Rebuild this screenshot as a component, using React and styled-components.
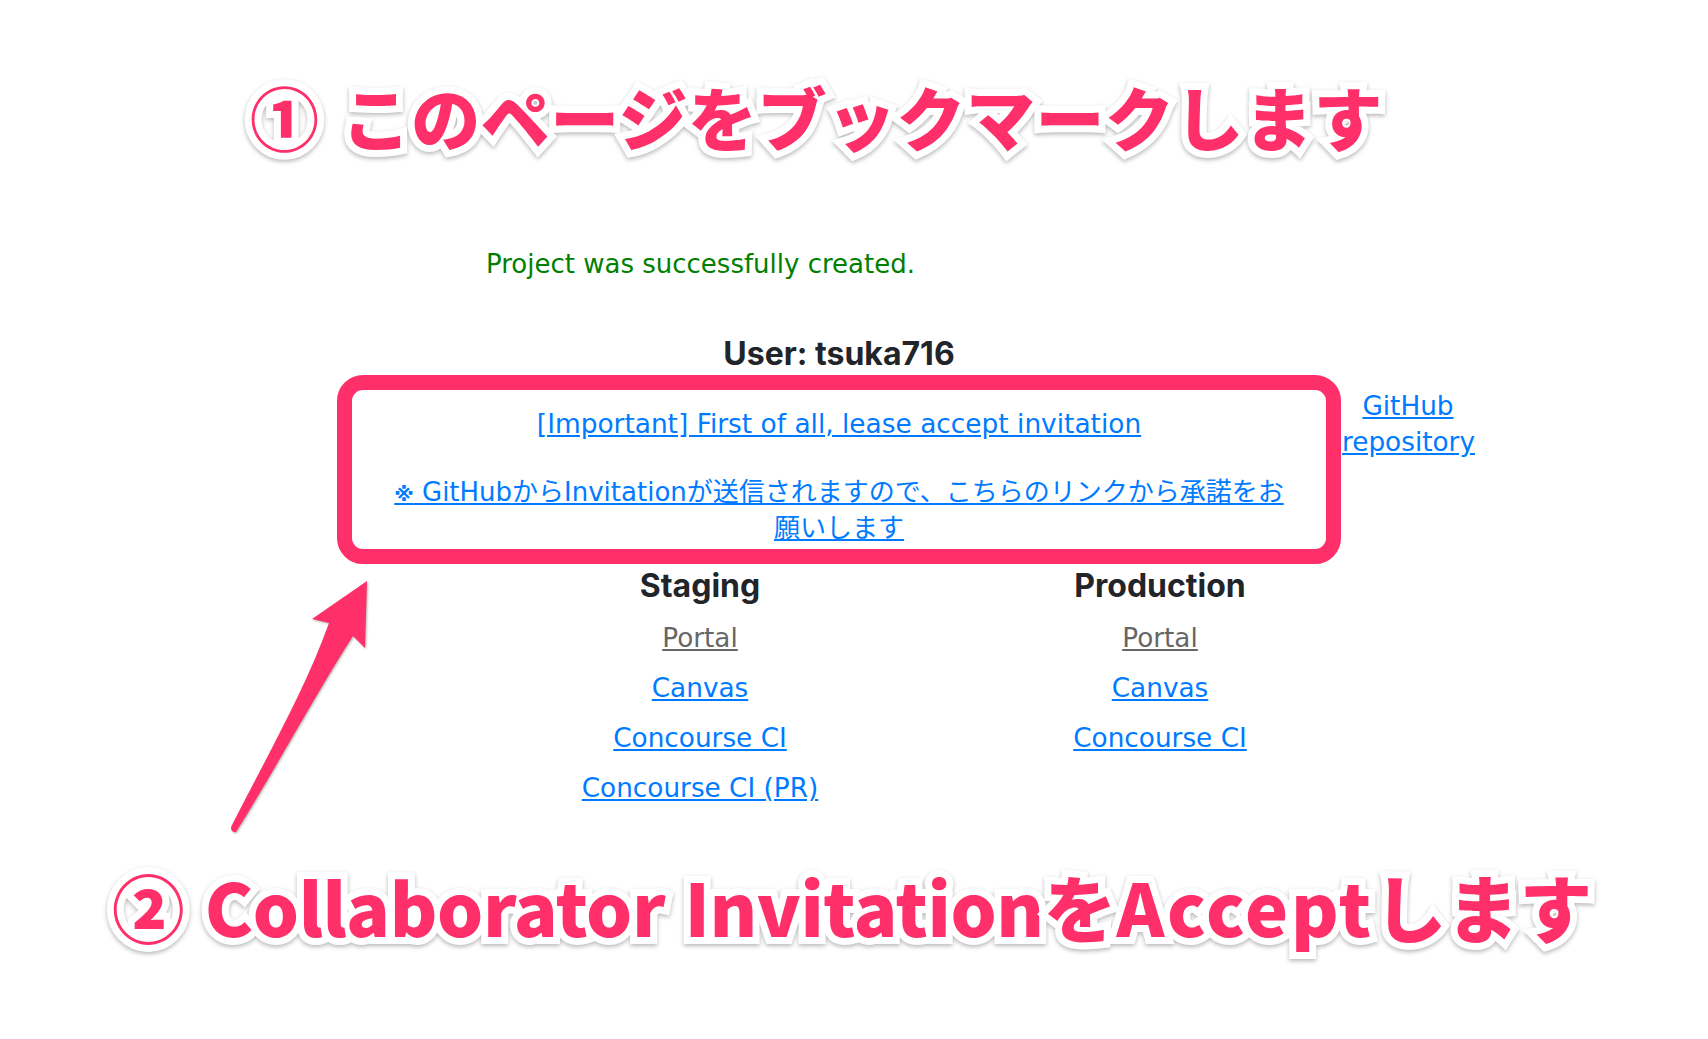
import React from "react";
import styled, { createGlobalStyle } from "styled-components";

const Global = createGlobalStyle`
  html, body { margin: 0; padding: 0; background: #fff; }
  body { font-family: "DejaVu Sans", Verdana, "Noto Sans CJK JP", sans-serif; }
`;

const Page = styled.div`
  position: relative;
  width: 1708px;
  height: 1039px;
  overflow: hidden;
  display: flex;
  flex-direction: column;
`;

const Callout = styled.div`
  align-self: flex-start;
  margin: ${(p) => p.$margin};
  font-family: "Noto Sans CJK JP", sans-serif;
  font-weight: 900;
  font-size: ${(p) => p.$size}px;
  line-height: 1;
  letter-spacing: ${(p) => p.$spacing}px;
  word-spacing: ${(p) => p.$words}px;
  white-space: nowrap;
  color: #ff2f69;
  -webkit-text-stroke: 14px #fff;
  paint-order: stroke fill;
  filter: drop-shadow(0 2px 2px rgba(0, 0, 0, 0.28));
`;

const Spaced = styled.span`
  letter-spacing: ${(p) => p.$spacing}px;
`;

const Flash = styled.p`
  margin: 95px 0 0 486px;
  font-size: 26px;
  line-height: 36px;
  color: #008000;
`;

const Content = styled.div`
  display: flex;
  flex-direction: column;
  margin: 53px 0 0 337px;
  font-size: 26.3px;
  line-height: 36px;
`;

const TopRow = styled.div`
  display: flex;
  align-items: flex-start;
`;

const Main = styled.main`
  width: 1004px;
  display: flex;
  flex-direction: column;
  align-items: center;
`;

const UserHeading = styled.h2`
  margin: 0 0 2px;
  font-family: Inter, "Liberation Sans", Arial, sans-serif;
  font-weight: 700;
  font-size: 32px;
  line-height: 38px;
  color: #212529;
`;

const Notice = styled.div`
  box-sizing: border-box;
  width: 1004px;
  height: 189px;
  border: 15px solid #ff2f69;
  border-radius: 26px;
  padding: 16px 30px 0;
  text-align: center;
`;

const NoticeLine = styled.p`
  margin: ${(p) => (p.$note ? "32px 0 0" : "0")};
  font-size: ${(p) => (p.$note ? "26px" : "26.4px")};
`;

const Link = styled.a`
  color: ${(p) => (p.$muted ? "#666666" : "#007bff")};
  text-decoration: underline;
  cursor: pointer;
`;

const Mark = styled.span`
  font-size: 20px;
  font-weight: 700;
  line-height: 1;
`;

const Columns = styled.div`
  display: grid;
  grid-template-columns: 460px 460px;
  margin: 3px 0 0 133px;
`;

const Column = styled.section`
  display: flex;
  flex-direction: column;
  align-items: center;
`;

const ColumnTitle = styled.h3`
  margin: 0 0 15px;
  font-family: Inter, "Liberation Sans", Arial, sans-serif;
  font-weight: 700;
  font-size: 32px;
  line-height: 38px;
  color: #212529;
`;

const ColumnLink = styled.div`
  height: 50px;
`;

const Side = styled.aside`
  width: 132px;
  margin: 53px 0 0 1px;
  text-align: center;
`;

const Arrow = styled.svg`
  position: absolute;
  left: 220px;
  top: 570px;
  filter: drop-shadow(1px 1px 1px rgba(0, 0, 0, 0.3));
`;

const columns = [
  { title: "Staging", links: ["Portal", "Canvas", "Concourse CI", "Concourse CI (PR)"] },
  { title: "Production", links: ["Portal", "Canvas", "Concourse CI"] },
];

export default function App() {
  return (
    <Page>
      <Global />
      <Callout $margin="82px 0 0 250px" $size={69} $spacing={0.5} $words={6}>① このページをブックマークします</Callout>
      <Flash>Project was successfully created.</Flash>
      <Content>
        <TopRow>
          <Main>
            <UserHeading>User: tsuka716</UserHeading>
            <Notice>
              <NoticeLine><Link>[Important] First of all, lease accept invitation</Link></NoticeLine>
              <NoticeLine $note><Link><Mark>※</Mark> GitHubからInvitationが送信されますので、こちらのリンクから承諾をお願いします</Link></NoticeLine>
            </Notice>
          </Main>
          <Side><Link>GitHub repository</Link></Side>
        </TopRow>
        <Columns>
          {columns.map((c) => (
            <Column key={c.title}>
              <ColumnTitle>{c.title}</ColumnTitle>
              {c.links.map((l) => (
                <ColumnLink key={l}><Link $muted={l === "Portal"}>{l}</Link></ColumnLink>
              ))}
            </Column>
          ))}
        </Columns>
      </Content>
      <Callout $margin="50px 0 0 112px" $size={72.6} $spacing={0.3} $words={3}>② <Spaced $spacing={-0.4}>Collaborator Invitation</Spaced>を<Spaced $spacing={2.5}>Accept</Spaced>します</Callout>
      <Arrow width="160" height="270" viewBox="220 570 160 270" aria-hidden="true">
        <path d="M367 581 L312 619 Q320 621 329 623 C 305 690 265 760 231 827 Q231 833 236 832 C 275 770 315 695 353 636 L365 648 Z" fill="#ff2f69" />
      </Arrow>
    </Page>
  );
}
